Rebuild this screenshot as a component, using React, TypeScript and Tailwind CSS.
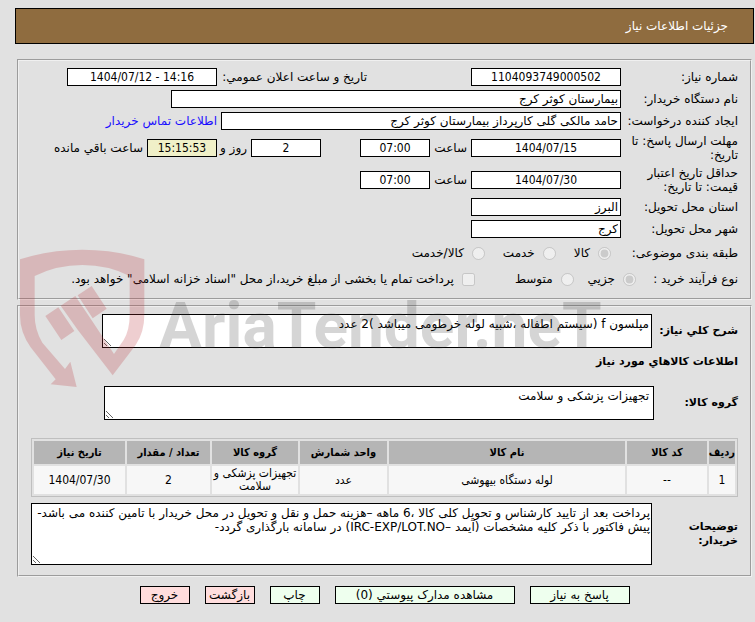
import type { ReactNode } from 'react';

const items = [
  {
    row: '1',
    code: '--',
    name: 'لوله دستگاه بیهوشی',
    unit: 'عدد',
    group: 'تجهیزات پزشکی و سلامت',
    qty: '2',
    date: '1404/07/30',
  },
];

function Panel({ children, className }: { children: ReactNode; className: string }) {
  return (
    <section className={`mx-[2px] border-2 border-[#f0f0f0] [border-style:groove] px-3 ${className}`}>
      {children}
    </section>
  );
}

function Label({ id, children }: { id?: string; children: ReactNode }) {
  return (
    <label htmlFor={id} className="w-[117px] shrink-0 leading-[14px]">
      {children}
    </label>
  );
}

const box = 'h-[18px] border border-black px-[2px] text-black';

function DateBox({ id, value, label, className }: { id?: string; value: string; label?: string; className: string }) {
  return (
    <input
      id={id}
      aria-label={label}
      readOnly
      dir="ltr"
      defaultValue={value}
      className={`${box} text-center font-['DejaVu_Sans_Condensed',sans-serif] ${className}`}
    />
  );
}

function Option({ name, text, checked }: { name: string; text: string; checked?: boolean }) {
  return (
    <label className="flex items-center gap-2">
      <input type="radio" name={name} disabled defaultChecked={checked} className="size-[13px]" />
      {text}
    </label>
  );
}

function Watermark() {
  return (
    <div dir="ltr" aria-hidden="true" className="pointer-events-none absolute top-[245px] left-[15px] flex items-start">
      <svg viewBox="0 0 405 435" className="h-[145px] w-[135px] fill-[#b93237] opacity-[0.23]">
        <path d="M15 43Q105 14 202 14Q300 14 388 43V210Q388 262 362 300L293 391L188 254L137 182L181 153L230 226L297 327L326 285Q344 255 344 210V93Q280 60 202 60Q125 60 59 93V210Q59 255 82 293L150 372L166 350L185 426L107 418L122 403L47 307Q15 262 15 210Z" />
        <path d="M91 213L130 187L178 258L139 285ZM188 151L230 123L275 191L233 220Z" />
      </svg>
      <span className="mt-9 ml-[9px] font-['Roboto',sans-serif] text-[64px] leading-[92px] font-bold text-[#333] opacity-20">
        AriaTender.neT
      </span>
    </div>
  );
}

export default function App() {
  return (
    <div
      dir="rtl"
      className="relative min-h-screen bg-[#e1e1e1] pt-2 pr-px pb-4 pl-[15px] font-['DejaVu_Sans',sans-serif] text-[12px] leading-[14px] text-black"
    >
      <header className="flex h-9 items-center border border-black bg-[#8f6c3f] px-[25px] text-white">
        <h1>جزئيات اطلاعات نیاز</h1>
      </header>

      <Panel className="mt-[15px] pt-[5px] pb-[6px]">
        <div className="flex h-[22px] items-center">
          <Label id="number">شماره نیاز:</Label>
          <DateBox id="number" value="1104093749000502" className="w-[150px] bg-white" />
          <label htmlFor="announced" className="mr-[104px] w-[150px] whitespace-nowrap">
            تاریخ و ساعت اعلان عمومي:
          </label>
          <DateBox id="announced" value="1404/07/12 - 14:16" className="w-[150px] bg-white" />
        </div>
        <div className="flex h-[22px] items-center">
          <Label id="org">نام دستگاه خریدار:</Label>
          <input id="org" readOnly defaultValue="بیمارستان کوثر کرج" className={`${box} w-[450px] bg-white`} />
        </div>
        <div className="flex h-[22px] items-center">
          <Label id="creator">ایجاد کننده درخواست:</Label>
          <input
            id="creator"
            readOnly
            defaultValue="حامد مالکی گلی کارپرداز بیمارستان کوثر کرج"
            className={`${box} w-[400px] bg-white`}
          />
          <a href="#contact" className="mr-1 text-[#1a0dff]">
            اطلاعات تماس خریدار
          </a>
        </div>
        <div className="flex h-8 items-center">
          <Label id="deadline">مهلت ارسال پاسخ: تا تاریخ:</Label>
          <DateBox id="deadline" value="1404/07/15" className="w-[150px] bg-white" />
          <label htmlFor="deadline-time" className="w-[41px] pr-1">
            ساعت
          </label>
          <DateBox id="deadline-time" value="07:00" className="w-[70px] bg-white" />
          <DateBox label="روز" value="2" className="mr-[39px] w-[70px] bg-white" />
          <span className="w-[34px] pr-1 whitespace-nowrap">روز و</span>
          <DateBox label="ساعت باقي مانده" value="15:15:53" className="w-[70px] bg-[#f0f0c8]" />
          <span className="pr-1">ساعت باقي مانده</span>
        </div>
        <div className="flex h-8 items-center">
          <Label id="valid">حداقل تاریخ اعتبار قیمت: تا تاریخ:</Label>
          <DateBox id="valid" value="1404/07/30" className="w-[150px] bg-white" />
          <label htmlFor="valid-time" className="w-[41px] pr-1">
            ساعت
          </label>
          <DateBox id="valid-time" value="07:00" className="w-[70px] bg-white" />
        </div>
        <div className="flex h-[22px] items-center">
          <Label id="province">استان محل تحویل:</Label>
          <input id="province" readOnly defaultValue="البرز" className={`${box} w-[150px] bg-white`} />
        </div>
        <div className="flex h-[22px] items-center">
          <Label id="city">شهر محل تحویل:</Label>
          <input id="city" readOnly defaultValue="کرج" className={`${box} w-[150px] bg-white`} />
        </div>
        <fieldset className="flex h-[26px] items-center">
          <legend className="float-right w-[127px]">طبقه بندی موضوعی:</legend>
          <div className="flex gap-[18px]">
            <Option name="subject" text="کالا" checked />
            <Option name="subject" text="خدمت" />
            <Option name="subject" text="کالا/خدمت" />
          </div>
        </fieldset>
        <fieldset className="flex h-[26px] items-center">
          <legend className="float-right w-[102px]">نوع فرآیند خرید :</legend>
          <div className="flex gap-[14px]">
            <Option name="process" text="جزیي" checked />
            <Option name="process" text="متوسط" />
          </div>
          <label className="mr-10 flex items-center gap-2 whitespace-nowrap">
            <input type="checkbox" disabled className="size-[13px]" />
            پرداخت تمام یا بخشی از مبلغ خرید،از محل "اسناد خزانه اسلامی" خواهد بود.
          </label>
        </fieldset>
      </Panel>

      <Panel className="mt-[5px] pt-[7px] pb-[10px]">
        <div className="flex items-center">
          <label htmlFor="summary" className="w-[86px] shrink-0 text-[11px] font-bold whitespace-nowrap">
            شرح کلي نیاز:
          </label>
          <textarea
            id="summary"
            readOnly
            defaultValue="مپلسون f (سیستم اطفاله ،شبیه لوله خرطومی میباشد )2 عدد"
            className="block h-[34px] w-[550px] border border-black bg-white p-[2px]"
          />
        </div>
        <h2 className="mt-[7px] text-[11px] font-bold">اطلاعات کالاهاي مورد نیاز</h2>
        <div className="mt-[17px] flex items-center">
          <label htmlFor="group" className="w-[84px] shrink-0 text-[11px] font-bold">
            گروه کالا:
          </label>
          <textarea
            id="group"
            readOnly
            defaultValue="تجهیزات پزشکی و سلامت"
            className="block h-[34px] w-[550px] border border-black bg-white px-1 py-[2px]"
          />
        </div>

        <table className="mt-[18px] w-full table-fixed border-separate border-spacing-[2px] border border-[#bfbfbf] text-center font-['DejaVu_Sans_Condensed','DejaVu_Sans',sans-serif]">
          <colgroup>
            <col className="w-[26px]" />
            <col className="w-[80px]" />
            <col />
            <col className="w-[87px]" />
            <col className="w-[86px]" />
            <col className="w-[83px]" />
            <col className="w-[91px]" />
          </colgroup>
          <thead>
            <tr className="h-[23px] bg-[#b5b5b5] text-[11px]">
              <th className="whitespace-nowrap">ردیف</th>
              <th>کد کالا</th>
              <th>نام کالا</th>
              <th>واحد شمارش</th>
              <th>گروه کالا</th>
              <th>تعداد / مقدار</th>
              <th>تاریخ نیاز</th>
            </tr>
          </thead>
          <tbody>
            {items.map((item) => (
              <tr key={item.row} className="h-7 bg-[#f7f7f7] leading-[13px]">
                <td>{item.row}</td>
                <td>{item.code}</td>
                <td>{item.name}</td>
                <td>{item.unit}</td>
                <td>{item.group}</td>
                <td>{item.qty}</td>
                <td>{item.date}</td>
              </tr>
            ))}
          </tbody>
        </table>

        <div className="mt-[6px] flex items-center">
          <label htmlFor="notes" className="w-[86px] shrink-0 pl-5 text-[11px] font-bold">
            توضیحات خریدار:
          </label>
          <textarea
            id="notes"
            readOnly
            defaultValue={
              'پرداخت بعد از تایید کارشناس و تحویل کلی کالا ،6 ماهه –هزینه حمل و نقل و تحویل در محل خریدار با تامین کننده می باشد-\nپیش فاکتور با ذکر کلیه مشخصات (آیمد –IRC-EXP/LOT.NO) در سامانه بارگذاری گردد-'
            }
            className="block h-[62px] min-w-0 flex-1 border border-black bg-white px-px py-[2px]"
          />
        </div>
      </Panel>

      <div className="mt-[9px] flex justify-center gap-[15px]">
        <button className="h-[18px] w-[100px] border border-black bg-[#eeffee]">پاسخ به نیاز</button>
        <button className="h-[18px] w-[180px] border border-black bg-[#eeffee]">مشاهده مدارک پیوستي (0)</button>
        <button className="h-[18px] w-[50px] border border-black bg-[#eeffee]">چاپ</button>
        <button className="h-[18px] w-[50px] border border-black bg-[#ffdddd]">بازگشت</button>
        <button className="h-[18px] w-[50px] border border-black bg-[#ffdddd]">خروج</button>
      </div>

      <Watermark />
    </div>
  );
}
